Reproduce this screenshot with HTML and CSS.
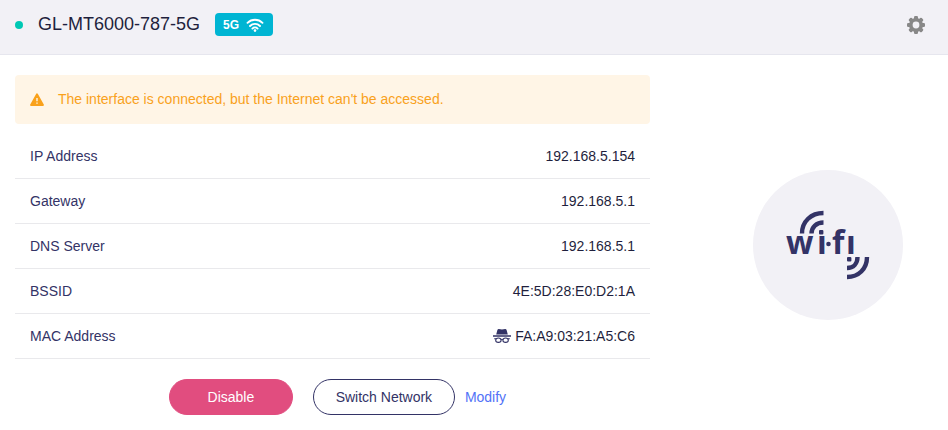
FILE: index.html
```html
<!DOCTYPE html>
<html lang="en">
<head>
    <meta charset="UTF-8">
    <meta name="viewport" content="width=device-width, initial-scale=1.0">
    <title>Repeater</title>
    <link rel="stylesheet" href="styles.css">
</head>
<body>
    <header class="card-header">
        <span class="status-dot"></span>
        <h1 class="network-name">GL-MT6000-787-5G</h1>
        <span class="band-tag">
            5G
            <svg class="band-icon" viewBox="0 0 18 14" aria-hidden="true">
                <path d="M1.5 4.8a10.6 10.6 0 0 1 15 0M4 8a7 7 0 0 1 10 0M6.4 10.6a3.7 3.7 0 0 1 5.2 0" fill="none" stroke="currentColor" stroke-width="1.9" stroke-linecap="round"/>
                <circle cx="9" cy="12.6" r="1.3" fill="currentColor"/>
            </svg>
        </span>
        <button type="button" class="settings-btn" aria-label="Settings">
            <svg viewBox="0 0 18 18" aria-hidden="true">
                <g fill="currentColor">
                    <rect id="tooth" x="7" y="0" width="4" height="18" rx="1.2"/>
                    <use href="#tooth" transform="rotate(45 9 9)"/>
                    <use href="#tooth" transform="rotate(90 9 9)"/>
                    <use href="#tooth" transform="rotate(135 9 9)"/>
                    <circle cx="9" cy="9" r="7"/>
                </g>
                <circle cx="9" cy="9" r="3.4" fill="#f2f1f6"/>
            </svg>
        </button>
    </header>

    <main class="card-body">
        <section class="details">
            <div class="alert" role="alert">
                <svg class="alert-icon" viewBox="0 0 14 13" aria-hidden="true">
                    <path d="M7 1.2 13 12H1z" fill="currentColor" stroke="currentColor" stroke-width="1.8" stroke-linejoin="round"/>
                    <path d="M7 5v3.2M7 9.4v1.4" stroke="#fff5e6" stroke-width="1.4"/>
                </svg>
                <span>The interface is connected, but the Internet can't be accessed.</span>
            </div>

            <table class="info">
                <tr><th scope="row">IP Address</th><td>192.168.5.154</td></tr>
                <tr><th scope="row">Gateway</th><td>192.168.5.1</td></tr>
                <tr><th scope="row">DNS Server</th><td>192.168.5.1</td></tr>
                <tr><th scope="row">BSSID</th><td>4E:5D:28:E0:D2:1A</td></tr>
                <tr>
                    <th scope="row">MAC Address</th>
                    <td>
                        <svg class="mask-icon" viewBox="0 0 18 14" aria-hidden="true">
                            <path d="M3.2 5.4 4.4 1Q4.7 0 5.8 0L9 .5 12.2 0q1.1 0 1.4 1l1.2 4.4zM0 6.3h18v1.4H0z" fill="currentColor"/>
                            <g fill="none" stroke="currentColor" stroke-width="1.1">
                                <ellipse cx="5.4" cy="11.2" rx="2.7" ry="2.2"/>
                                <ellipse cx="12.6" cy="11.2" rx="2.7" ry="2.2"/>
                                <path d="M1.2 9.7h2M14.8 9.7h2M8 10.6q1-.8 2 0"/>
                            </g>
                        </svg>
                        FA:A9:03:21:A5:C6
                    </td>
                </tr>
            </table>

            <div class="actions">
                <button type="button" class="btn btn-danger">Disable</button>
                <button type="button" class="btn btn-outline">Switch Network</button>
                <a class="modify" href="#">Modify</a>
            </div>
        </section>

        <div class="wifi-badge">
            <svg class="wifi-logo" viewBox="0 0 84 70" role="img" aria-label="Wi-Fi">
                <g fill="none" stroke="currentColor" stroke-width="4.4">
                    <path d="M16 23.5C16 11.5 25 3 37.5 3M25.5 23.5C25.5 17 30.5 12.5 37.5 12.5"/>
                    <path d="M81 47C81 59 72.5 67 61 67M71.5 47C71.5 53.5 67.5 58 61 58"/>
                </g>
                <g fill="currentColor">
                    <rect x="33" y="20" width="4.4" height="4.4" rx="1"/>
                    <rect x="61" y="47" width="4.4" height="4.4" rx="1"/>
                    <circle cx="42.5" cy="34" r="2.3"/>
                </g>
                <text class="logo-text" y="44"><tspan x="0">w</tspan><tspan x="31">ı</tspan><tspan x="46">f</tspan><tspan x="60">ı</tspan></text>
            </svg>
        </div>
    </main>
</body>
</html>
```
FILE: styles.css
```css
* {
    box-sizing: border-box;
}
body {
    margin: 0;
    background: #fff;
    color: #1f1f3d;
    font-family: "Liberation Sans", Arial, sans-serif;
    font-size: 14px;
}
button {
    font: inherit;
    cursor: pointer;
}

/* header */
.card-header {
    display: flex;
    align-items: center;
    height: 55px;
    padding: 0 23px 5px 15px;
    background: #f2f1f6;
    border-bottom: 1px solid #e6e6ee;
}
.status-dot {
    width: 8px;
    height: 8px;
    margin-right: 15px;
    border-radius: 50%;
    background: #00c8b4;
}
.network-name {
    margin: 0 15px 0 0;
    font-size: 18px;
    font-weight: normal;
}
.band-tag {
    display: flex;
    align-items: center;
    gap: 7px;
    height: 23px;
    padding: 0 9px 0 8px;
    border-radius: 4px;
    background: #00b5d3;
    color: #fff;
    font-size: 12px;
    font-weight: bold;
}
.band-icon {
    width: 18px;
    height: 14px;
}
.settings-btn {
    display: flex;
    margin-left: auto;
    padding: 0;
    border: none;
    background: none;
    color: #888;
}
.settings-btn svg {
    width: 18px;
    height: 18px;
}

/* body */
.card-body {
    display: grid;
    grid-template-columns: 1fr 150px;
    gap: 103px;
    align-items: center;
    padding: 20px 45px 15px 15px;
}
.alert {
    display: flex;
    align-items: center;
    gap: 14px;
    height: 49px;
    margin-bottom: 10px;
    padding: 0 15px 1px;
    border-radius: 4px;
    background: #fff5e6;
    color: #f9a11b;
}
.alert-icon {
    width: 14px;
    height: 13px;
}
.info {
    width: 100%;
    border-collapse: separate;
    border-spacing: 0;
}
.info th,
.info td {
    height: 45px;
    padding: 0 15px;
    border-bottom: 1px solid #e9e9ec;
}
.info th {
    color: #333366;
    font-weight: normal;
    text-align: left;
}
.info td {
    text-align: right;
}
.mask-icon {
    width: 18px;
    height: 14px;
    color: #333366;
    vertical-align: -2px;
}
.actions {
    display: flex;
    align-items: center;
    justify-content: center;
    padding: 20px 0 0 10px;
}
.btn {
    height: 36px;
    margin-right: 20px;
    border: 1px solid #e14d7f;
    border-radius: 18px;
}
.btn-danger {
    width: 124px;
    background: #e14d7f;
    color: #fff;
}
.btn-outline {
    width: 142px;
    margin-right: 10px;
    border-color: #333366;
    background: #fff;
    color: #333366;
}
.modify {
    color: #5272f7;
    text-decoration: none;
}
.wifi-badge {
    display: flex;
    align-items: center;
    justify-content: center;
    height: 150px;
    border-radius: 50%;
    background: #f2f1f6;
    color: #333366;
}
.wifi-logo {
    width: 84px;
    height: 70px;
}
.logo-text {
    fill: currentColor;
    font-family: "Open Sans", sans-serif;
    font-size: 32px;
    font-weight: bold;
}
```
